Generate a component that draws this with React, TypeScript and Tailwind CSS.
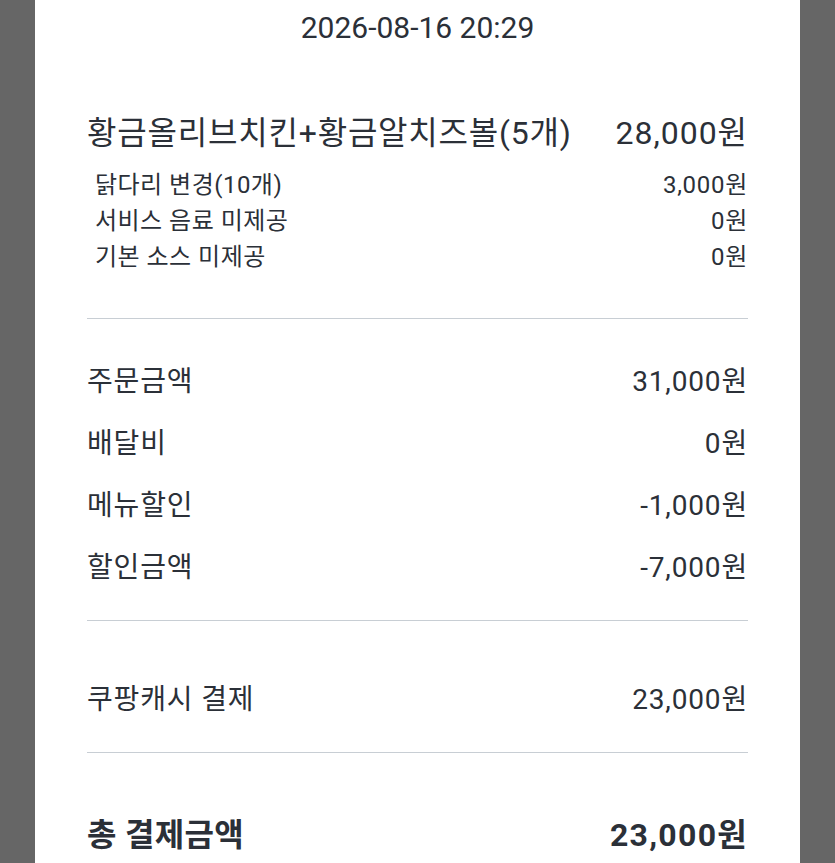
import React from 'react';

const options = [
  { name: '닭다리 변경(10개)', price: '3,000원' },
  { name: '서비스 음료 미제공', price: '0원' },
  { name: '기본 소스 미제공', price: '0원' },
];

const summary = [
  { label: '주문금액', value: '31,000원' },
  { label: '배달비', value: '0원' },
  { label: '메뉴할인', value: '-1,000원' },
  { label: '할인금액', value: '-7,000원' },
];

const Row: React.FC<{ label: string; value: string }> = ({ label, value }) => (
  <div className="flex h-[62px] items-center justify-between text-[28px] leading-none">
    <span className="tracking-[0.03em]">{label}</span>
    <span className="tracking-[0.03em]">{value}</span>
  </div>
);

const App: React.FC = () => {
  return (
    <div
      className="flex min-h-screen justify-center bg-[#666666] text-[#2b3038]"
      style={{ fontFamily: 'Roboto, "Noto Sans CJK KR", sans-serif' }}
    >
      <div className="w-[765px] bg-white px-[52px] pb-6">
        <div className="flex h-[54px] items-center justify-center text-[30px]">2026-08-16 20:29</div>

        <div className="mt-[57px] flex h-[44px] items-center justify-between text-[32px] leading-none">
          <span className="tracking-[0.025em]">황금올리브치킨+황금알치즈볼(5개)</span>
          <span className="tracking-[0.03em]">28,000원</span>
        </div>

        <div className="mt-[12px] flex flex-col pl-2 text-[24px] leading-none">
          {options.map((o) => (
            <div key={o.name} className="flex h-[36px] items-center justify-between">
              <span className="tracking-[0.02em]">{o.name}</span>
              <span className="tracking-[0.03em]">{o.price}</span>
            </div>
          ))}
        </div>

        <div className="mt-[43px] h-px bg-[#c8ced4]" />

        <div className="pt-[32px] pb-[21px]">
          {summary.map((r) => (
            <Row key={r.label} label={r.label} value={r.value} />
          ))}
        </div>

        <div className="h-px bg-[#c8ced4]" />

        <div className="pt-[48px] pb-[21px]">
          <Row label="쿠팡캐시 결제" value="23,000원" />
        </div>

        <div className="h-px bg-[#c8ced4]" />

        <div className="mt-[51px] flex h-[62px] items-center justify-between text-[32px] font-bold leading-none">
          <span className="tracking-[0.01em]">총 결제금액</span>
          <span className="tracking-[0.04em]">23,000원</span>
        </div>
      </div>
    </div>
  );
};

export default App;
